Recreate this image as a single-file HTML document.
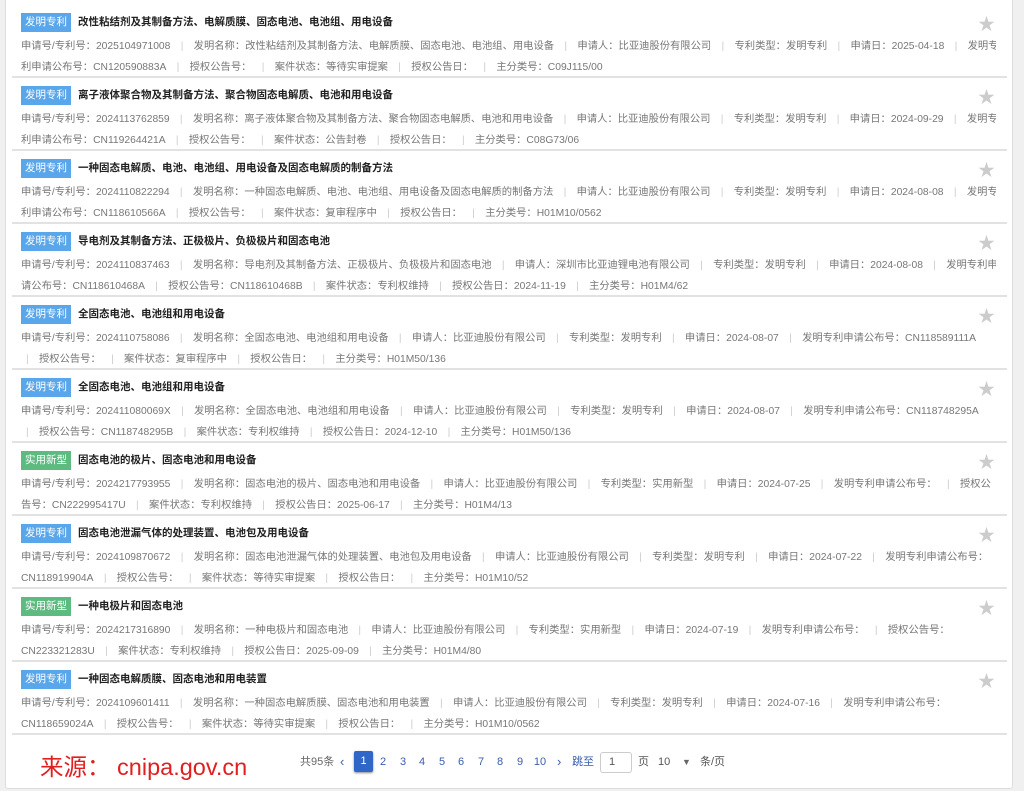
<!DOCTYPE html>
<html><head><meta charset="utf-8"><style>
*{margin:0;padding:0;box-sizing:border-box}
body{width:1024px;height:791px;background:#f0f0f0;font-family:"Liberation Sans","Noto Sans CJK SC",sans-serif;position:relative;overflow:hidden}
.box{position:absolute;left:5px;top:-2px;width:1008px;height:791px;background:#fff;border:1px solid #ddd;border-radius:3px}
.row{position:absolute;left:12px;width:995px;height:73px;border-bottom:2px solid #e2e2e2}
.t{position:absolute;left:9px;top:8px;height:19px;line-height:19px;font-size:10.5px;white-space:nowrap;font-weight:bold;color:#222}
.b{display:inline-block;background:#5aa6ea;color:#fff;font-weight:normal;padding:0 4px;margin-right:7px;height:19px}
.b.g{background:#5dbb80}
.l{position:absolute;left:9px;font-size:10.3px;color:#777;white-space:nowrap;overflow:hidden;width:975px}
.l2{top:32px}.l3{top:53px}
.s{color:#ccc;margin:0 10.3px}
.star{position:absolute;right:12px;top:5px;color:#ccc;font-size:17px}
.pg{position:absolute;top:752px;font-size:11px;color:#555;height:20px;line-height:20px}
.n{position:absolute;top:752px;font-size:11px;color:#3a5dae;width:18px;text-align:center;line-height:20px}
</style></head><body>
<div class="box"></div>

<div class="row" style="top:5px"><div class="t"><span class="b">发明专利</span>改性粘结剂及其制备方法、电解质膜、固态电池、电池组、用电设备</div><div class="star">★</div>
<div class="l l2">申请号/专利号：2025104971008<span class="s">|</span>发明名称：改性粘结剂及其制备方法、电解质膜、固态电池、电池组、用电设备<span class="s">|</span>申请人：比亚迪股份有限公司<span class="s">|</span>专利类型：发明专利<span class="s">|</span>申请日：2025-04-18<span class="s">|</span>发明专</div>
<div class="l l3">利申请公布号：CN120590883A<span class="s">|</span>授权公告号：<span class="s">|</span>案件状态：等待实审提案<span class="s">|</span>授权公告日：<span class="s">|</span>主分类号：C09J115/00</div></div>

<div class="row" style="top:78px"><div class="t"><span class="b">发明专利</span>离子液体聚合物及其制备方法、聚合物固态电解质、电池和用电设备</div><div class="star">★</div>
<div class="l l2">申请号/专利号：2024113762859<span class="s">|</span>发明名称：离子液体聚合物及其制备方法、聚合物固态电解质、电池和用电设备<span class="s">|</span>申请人：比亚迪股份有限公司<span class="s">|</span>专利类型：发明专利<span class="s">|</span>申请日：2024-09-29<span class="s">|</span>发明专</div>
<div class="l l3">利申请公布号：CN119264421A<span class="s">|</span>授权公告号：<span class="s">|</span>案件状态：公告封卷<span class="s">|</span>授权公告日：<span class="s">|</span>主分类号：C08G73/06</div></div>

<div class="row" style="top:151px"><div class="t"><span class="b">发明专利</span>一种固态电解质、电池、电池组、用电设备及固态电解质的制备方法</div><div class="star">★</div>
<div class="l l2">申请号/专利号：2024110822294<span class="s">|</span>发明名称：一种固态电解质、电池、电池组、用电设备及固态电解质的制备方法<span class="s">|</span>申请人：比亚迪股份有限公司<span class="s">|</span>专利类型：发明专利<span class="s">|</span>申请日：2024-08-08<span class="s">|</span>发明专</div>
<div class="l l3">利申请公布号：CN118610566A<span class="s">|</span>授权公告号：<span class="s">|</span>案件状态：复审程序中<span class="s">|</span>授权公告日：<span class="s">|</span>主分类号：H01M10/0562</div></div>

<div class="row" style="top:224px"><div class="t"><span class="b">发明专利</span>导电剂及其制备方法、正极极片、负极极片和固态电池</div><div class="star">★</div>
<div class="l l2">申请号/专利号：2024110837463<span class="s">|</span>发明名称：导电剂及其制备方法、正极极片、负极极片和固态电池<span class="s">|</span>申请人：深圳市比亚迪锂电池有限公司<span class="s">|</span>专利类型：发明专利<span class="s">|</span>申请日：2024-08-08<span class="s">|</span>发明专利申</div>
<div class="l l3">请公布号：CN118610468A<span class="s">|</span>授权公告号：CN118610468B<span class="s">|</span>案件状态：专利权维持<span class="s">|</span>授权公告日：2024-11-19<span class="s">|</span>主分类号：H01M4/62</div></div>

<div class="row" style="top:297px"><div class="t"><span class="b">发明专利</span>全固态电池、电池组和用电设备</div><div class="star">★</div>
<div class="l l2">申请号/专利号：2024110758086<span class="s">|</span>发明名称：全固态电池、电池组和用电设备<span class="s">|</span>申请人：比亚迪股份有限公司<span class="s">|</span>专利类型：发明专利<span class="s">|</span>申请日：2024-08-07<span class="s">|</span>发明专利申请公布号：CN118589111A</div>
<div class="l l3"><span class="s" style="margin-left:5px">|</span>授权公告号：<span class="s">|</span>案件状态：复审程序中<span class="s">|</span>授权公告日：<span class="s">|</span>主分类号：H01M50/136</div></div>

<div class="row" style="top:370px"><div class="t"><span class="b">发明专利</span>全固态电池、电池组和用电设备</div><div class="star">★</div>
<div class="l l2">申请号/专利号：202411080069X<span class="s">|</span>发明名称：全固态电池、电池组和用电设备<span class="s">|</span>申请人：比亚迪股份有限公司<span class="s">|</span>专利类型：发明专利<span class="s">|</span>申请日：2024-08-07<span class="s">|</span>发明专利申请公布号：CN118748295A</div>
<div class="l l3"><span class="s" style="margin-left:5px">|</span>授权公告号：CN118748295B<span class="s">|</span>案件状态：专利权维持<span class="s">|</span>授权公告日：2024-12-10<span class="s">|</span>主分类号：H01M50/136</div></div>

<div class="row" style="top:443px"><div class="t"><span class="b g">实用新型</span>固态电池的极片、固态电池和用电设备</div><div class="star">★</div>
<div class="l l2">申请号/专利号：2024217793955<span class="s">|</span>发明名称：固态电池的极片、固态电池和用电设备<span class="s">|</span>申请人：比亚迪股份有限公司<span class="s">|</span>专利类型：实用新型<span class="s">|</span>申请日：2024-07-25<span class="s">|</span>发明专利申请公布号：<span class="s">|</span>授权公</div>
<div class="l l3">告号：CN222995417U<span class="s">|</span>案件状态：专利权维持<span class="s">|</span>授权公告日：2025-06-17<span class="s">|</span>主分类号：H01M4/13</div></div>

<div class="row" style="top:516px"><div class="t"><span class="b">发明专利</span>固态电池泄漏气体的处理装置、电池包及用电设备</div><div class="star">★</div>
<div class="l l2">申请号/专利号：2024109870672<span class="s">|</span>发明名称：固态电池泄漏气体的处理装置、电池包及用电设备<span class="s">|</span>申请人：比亚迪股份有限公司<span class="s">|</span>专利类型：发明专利<span class="s">|</span>申请日：2024-07-22<span class="s">|</span>发明专利申请公布号：</div>
<div class="l l3">CN118919904A<span class="s">|</span>授权公告号：<span class="s">|</span>案件状态：等待实审提案<span class="s">|</span>授权公告日：<span class="s">|</span>主分类号：H01M10/52</div></div>

<div class="row" style="top:589px"><div class="t"><span class="b g">实用新型</span>一种电极片和固态电池</div><div class="star">★</div>
<div class="l l2">申请号/专利号：2024217316890<span class="s">|</span>发明名称：一种电极片和固态电池<span class="s">|</span>申请人：比亚迪股份有限公司<span class="s">|</span>专利类型：实用新型<span class="s">|</span>申请日：2024-07-19<span class="s">|</span>发明专利申请公布号：<span class="s">|</span>授权公告号：</div>
<div class="l l3">CN223321283U<span class="s">|</span>案件状态：专利权维持<span class="s">|</span>授权公告日：2025-09-09<span class="s">|</span>主分类号：H01M4/80</div></div>

<div class="row" style="top:662px"><div class="t"><span class="b">发明专利</span>一种固态电解质膜、固态电池和用电装置</div><div class="star">★</div>
<div class="l l2">申请号/专利号：2024109601411<span class="s">|</span>发明名称：一种固态电解质膜、固态电池和用电装置<span class="s">|</span>申请人：比亚迪股份有限公司<span class="s">|</span>专利类型：发明专利<span class="s">|</span>申请日：2024-07-16<span class="s">|</span>发明专利申请公布号：</div>
<div class="l l3">CN118659024A<span class="s">|</span>授权公告号：<span class="s">|</span>案件状态：等待实审提案<span class="s">|</span>授权公告日：<span class="s">|</span>主分类号：H01M10/0562</div></div>

<div style="position:absolute;left:40px;top:752px;font-size:23.5px;color:#e02020;line-height:30px;white-space:nowrap">来源：&nbsp;cnipa.gov.cn</div>
<div class="pg" style="left:300px;color:#666">共95条</div>
<div class="pg" style="left:340px;color:#3a5dae;font-size:13px">‹</div>
<div style="position:absolute;left:354px;top:751px;width:19px;height:21px;background:#2f66c8;color:#fff;border-radius:2px;font-size:11px;text-align:center;line-height:21px;box-shadow:0 1px 2px #888">1</div>
<div class="n" style="left:374px">2</div><div class="n" style="left:394px">3</div><div class="n" style="left:413px">4</div><div class="n" style="left:433px">5</div><div class="n" style="left:452px">6</div><div class="n" style="left:472px">7</div><div class="n" style="left:491px">8</div><div class="n" style="left:511px">9</div><div class="n" style="left:530px;width:20px">10</div>
<div class="pg" style="left:557px;color:#3a5dae;font-size:13px">›</div>
<div class="pg" style="left:572px;color:#3a5dae">跳至</div>
<div style="position:absolute;left:600px;top:752px;width:32px;height:21px;border:1px solid #ccc;border-radius:3px;font-size:11px;color:#555;line-height:19px;padding-left:8px">1</div>
<div class="pg" style="left:638px">页</div>
<div class="pg" style="left:658px">10</div>
<div class="pg" style="left:682px;font-size:9px;color:#666">▼</div>
<div class="pg" style="left:700px">条/页</div>
</body></html>
